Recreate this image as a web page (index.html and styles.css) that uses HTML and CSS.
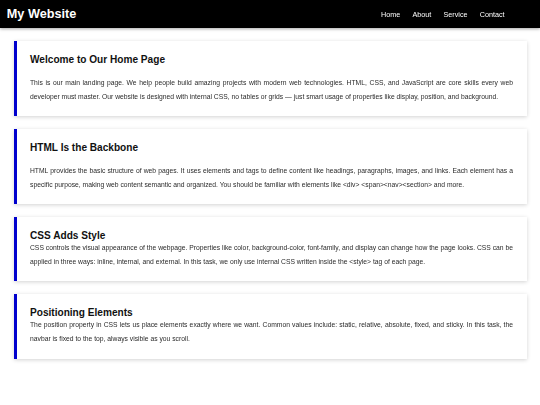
FILE: index.html
```html
<!DOCTYPE html>
<html lang="en">
<head>
<meta charset="utf-8">
<title>My Website</title>
<link rel="stylesheet" href="styles.css">
</head>
<body>
<header class="navbar">
  <div class="logo">My Website</div>
  <nav class="menu">
    <a class="menu-link" href="#">Home</a>
    <a class="menu-link" href="#">About</a>
    <a class="menu-link" href="#">Service</a>
    <a class="menu-link" href="#">Contact</a>
  </nav>
</header>
<main class="content">
  <section class="card">
    <h2 class="card-title">Welcome to Our Home Page</h2>
    <p class="card-text">This is our main landing page. We help people build amazing projects with modern web technologies. HTML, CSS, and JavaScript are core skills every web developer must master. Our website is designed with internal CSS, no tables or grids — just smart usage of properties like display, position, and background.</p>
  </section>
  <section class="card">
    <h2 class="card-title">HTML Is the Backbone</h2>
    <p class="card-text">HTML provides the basic structure of web pages. It uses elements and tags to define content like headings, paragraphs, images, and links. Each element has a specific purpose, making web content semantic and organized. You should be familiar with elements like &lt;div&gt; &lt;span&gt;&lt;nav&gt;&lt;section&gt; and more.</p>
  </section>
  <section class="card card-compact">
    <h2 class="card-title">CSS Adds Style</h2>
    <p class="card-text">CSS controls the visual appearance of the webpage. Properties like color, background-color, font-family, and display can change how the page looks. CSS can be applied in three ways: inline, internal, and external. In this task, we only use internal CSS written inside the &lt;style&gt; tag of each page.</p>
  </section>
  <section class="card card-compact">
    <h2 class="card-title">Positioning Elements</h2>
    <p class="card-text">The position property in CSS lets us place elements exactly where we want. Common values include: static, relative, absolute, fixed, and sticky. In this task, the navbar is fixed to the top, always visible as you scroll.</p>
  </section>
</main>
</body>
</html>
```
FILE: styles.css
```css
html, body {
  margin: 0;
  padding: 0;
  background: #ffffff;
  font-family: "Liberation Sans", Arial, sans-serif;
}

.navbar {
  display: flex;
  align-items: center;
  justify-content: space-between;
  height: 28px;
  padding: 0 35.7px 0 6.75px;
  background: #000000;
  box-shadow: 0 1px 3px rgba(0, 0, 0, 0.35);
}

.logo {
  color: #ffffff;
  font-weight: bold;
  font-size: 12.7px;
}

.menu {
  display: flex;
  gap: 12.3px;
  will-change: transform;
}

.menu-link {
  color: #ffffff;
  text-decoration: none;
  font-size: 7.2px;
}

.content {
  display: flex;
  flex-direction: column;
  gap: 12.8px;
  padding: 13px 13.5px;
}

.card {
  background: #ffffff;
  border-left: 3.4px solid #0000cd;
  padding: 13px 13.5px 13.5px;
  box-shadow: 0 1px 4px rgba(0, 0, 0, 0.18);
}

.card-title {
  margin: 0 0 10.7px;
  font-size: 10.1px;
  font-weight: bold;
  color: #111111;
}

.card-compact .card-title {
  margin-bottom: 0;
}

.card-text {
  margin: 0;
  font-size: 6.75px;
  line-height: 13.5px;
  color: #2b2b2b;
  text-align: justify;
  will-change: transform;
}
```
